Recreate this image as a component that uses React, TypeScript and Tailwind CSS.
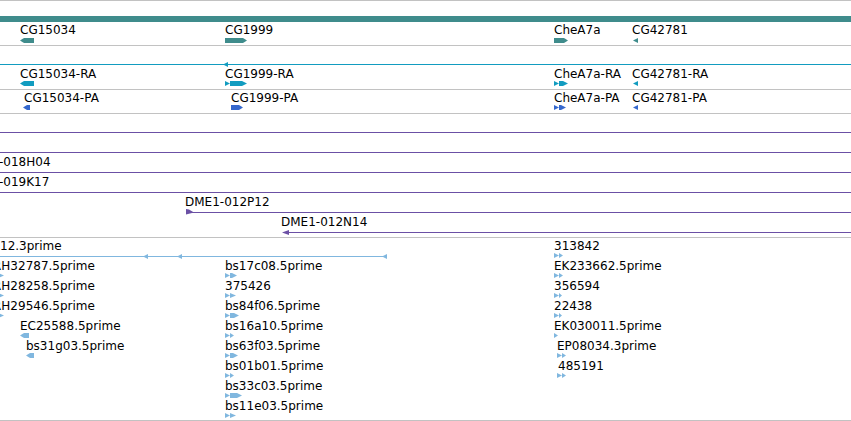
import React from "react";

const TEAL = "#3f8c8c";
const CYAN = "#129cc0";
const BLUE = "#3568cd";
const PURPLE = "#6b50a5";
const LIGHT = "#80b7df";

type Kind = "l" | "r" | "tl" | "tr" | "dr" | "rl";

const shape = (kind: Kind, w: number) => {
  switch (kind) {
    case "l":
      return [`0,2.5 4,0 ${w},0 ${w},5 4,5`];
    case "r":
      return [`0,0 ${w - 4},0 ${w},2.5 ${w - 4},5 0,5`];
    case "tl":
      return [`0,2.5 ${w},0 ${w},5`];
    case "tr":
      return [`0,0 ${w},2.5 0,5`];
    case "rl":
      // triangle followed by an arrow body (CG1999-RA)
      return ["0,0 5,2.5 0,5", `5,0 ${w - 5},0 ${w},2.5 ${w - 5},5 5,5`];
    case "dr":
      if (w <= 11) return ["0,0 5,2.5 0,5", `5,0 ${w},2.5 5,5`];
      return ["0,0 5,2.5 0,5", `5,0 ${w - 5},0 ${w},2.5 ${w - 5},5 5,5`];
  }
};

const Glyph = ({ w, kind, color }: { w: number; kind: Kind; color: string }) => (
  <svg className="block" width={w} height={5} viewBox={`0 0 ${w} 5`}>
    {shape(kind, w).map((p, i) => (
      <polygon key={i} points={p} fill={color} />
    ))}
  </svg>
);

type Feat = { x: number; label: string; w: number; kind: Kind; gdx?: number };

// label above, glyph below; x is the feature's place on the sequence
const Feature = ({ f, color, gap = 0 }: { f: Feat; color: string; gap?: number }) => (
  <div className="absolute top-0 flex flex-col items-start" style={{ left: f.x, gap }}>
    <span className="whitespace-nowrap text-[12px] leading-[14px] text-black">{f.label}</span>
    <div style={{ marginLeft: f.gdx ?? 0 }}>
      <Glyph w={f.w} kind={f.kind} color={color} />
    </div>
  </div>
);

const genes: Feat[] = [
  { x: 20, label: "CG15034", w: 14, kind: "l" },
  { x: 225, label: "CG1999", w: 22, kind: "r" },
  { x: 554, label: "CheA7a", w: 14, kind: "r" },
  { x: 632, label: "CG42781", gdx: 1, w: 5, kind: "tl" },
];

const transcripts: Feat[] = [
  { x: 20, label: "CG15034-RA", w: 14, kind: "l" },
  { x: 225, label: "CG1999-RA", w: 22, kind: "rl" },
  { x: 554, label: "CheA7a-RA", w: 14, kind: "dr" },
  { x: 632, label: "CG42781-RA", gdx: 1, w: 5, kind: "tl" },
];

const proteins: Feat[] = [
  { x: 24, label: "CG15034-PA", gdx: -1, w: 7, kind: "l" },
  { x: 231, label: "CG1999-PA", w: 12, kind: "r" },
  { x: 554, label: "CheA7a-PA", w: 12, kind: "dr" },
  { x: 632, label: "CG42781-PA", gdx: 1, w: 5, kind: "tl" },
];

// EST rows, top to bottom
const estRows: Feat[][] = [
  [{ x: 554, label: "313842", w: 9, kind: "dr" }],
  [
    { x: -7, label: "RH32787.5prime", gdx: 5, w: 6, kind: "tr" },
    { x: 225, label: "bs17c08.5prime", w: 12, kind: "dr" },
    { x: 554, label: "EK233662.5prime", w: 9, kind: "dr" },
  ],
  [
    { x: -7, label: "RH28258.5prime", gdx: 5, w: 6, kind: "tr" },
    { x: 225, label: "375426", w: 11, kind: "dr" },
    { x: 554, label: "356594", w: 8, kind: "dr" },
  ],
  [
    { x: -7, label: "RH29546.5prime", gdx: 5, w: 6, kind: "tr" },
    { x: 225, label: "bs84f06.5prime", w: 14, kind: "dr" },
    { x: 554, label: "22438", w: 8, kind: "dr" },
  ],
  [
    { x: 20, label: "EC25588.5prime", w: 9, kind: "l" },
    { x: 225, label: "bs16a10.5prime", w: 9, kind: "dr" },
    { x: 554, label: "EK030011.5prime", w: 4, kind: "tr" },
  ],
  [
    { x: 26, label: "bs31g03.5prime", w: 8, kind: "l" },
    { x: 225, label: "bs63f03.5prime", w: 13, kind: "dr" },
    { x: 557, label: "EP08034.3prime", w: 9, kind: "dr" },
  ],
  [
    { x: 225, label: "bs01b01.5prime", w: 9, kind: "dr" },
    { x: 558, label: "485191", gdx: -1, w: 9, kind: "dr" },
  ],
  [{ x: 225, label: "bs33c03.5prime", w: 17, kind: "dr" }],
  [{ x: 225, label: "bs11e03.5prime", w: 11, kind: "dr" }],
];

const Arrowhead = ({ x, color }: { x: number; color: string }) => (
  <svg className="absolute -top-[2px]" style={{ left: x }} width={5} height={5} viewBox="0 0 5 5">
    <polygon points="0,2.5 5,0 5,5" fill={color} />
  </svg>
);

export default function App() {
  return (
    <div className="w-[851px] h-[421px] overflow-hidden bg-white font-['DejaVu_Sans','Noto_Sans',sans-serif] flex flex-col">
      {/* gene track */}
      <div className="h-[46px] shrink-0 overflow-hidden border-y border-[#c2c2c2] flex flex-col">
        <div className="mt-[15px] h-[6px] w-full bg-[#3f8c8c]" />
        <div className="relative mt-px h-[20px]">
          {genes.map((f) => (
            <Feature key={f.label} f={f} color={TEAL} gap={1} />
          ))}
        </div>
      </div>

      {/* transcripts */}
      <div className="h-[44px] shrink-0 overflow-hidden border-b border-[#c2c2c2] flex flex-col">
        <div className="relative mt-[18px] h-px w-full bg-[#129cc0]">
          <Arrowhead x={223} color={CYAN} />
        </div>
        <div className="relative mt-[2px] h-[20px]">
          {transcripts.map((f) => (
            <Feature key={f.label} f={f} color={CYAN} />
          ))}
        </div>
      </div>

      {/* translations */}
      <div className="h-[24px] shrink-0 overflow-hidden border-b border-[#c2c2c2] flex flex-col">
        <div className="relative mt-px h-[20px]">
          {proteins.map((f) => (
            <Feature key={f.label} f={f} color={BLUE} />
          ))}
        </div>
      </div>

      {/* BAC clones */}
      <div className="relative h-[124px] shrink-0 overflow-hidden border-b border-[#c2c2c2] flex flex-col pt-[18px] gap-[19px]">
        <div className="h-px w-full bg-[#6b50a5]" />
        <div className="h-px w-full bg-[#6b50a5]" />
        <div className="h-px w-full bg-[#6b50a5]" />
        <div className="h-px w-full bg-[#6b50a5]" />
        <span className="absolute left-[-1px] top-[41px] whitespace-nowrap text-[12px] leading-[14px] text-black">
          -018H04
        </span>
        <span className="absolute left-[-1px] top-[61px] whitespace-nowrap text-[12px] leading-[14px] text-black">
          -019K17
        </span>
        <div className="absolute left-[185px] top-[81px] flex flex-col items-start">
          <span className="whitespace-nowrap text-[12px] leading-[14px] text-black">DME1-012P12</span>
          <svg className="block ml-px" width={666} height={6} viewBox="0 0 666 6">
            <polygon points="0,0 3,0.5 8,3.5 0,5.5" fill={PURPLE} />
            <rect x={4} y={3} width={662} height={1} fill={PURPLE} />
          </svg>
        </div>
        <div className="absolute left-[281px] top-[101px] flex flex-col items-start">
          <span className="whitespace-nowrap text-[12px] leading-[14px] text-black">DME1-012N14</span>
          <svg className="block ml-px" width={570} height={6} viewBox="0 0 570 6">
            <polygon points="0,3.5 7,1 7,6" fill={PURPLE} />
            <rect x={4} y={3} width={566} height={1} fill={PURPLE} />
          </svg>
        </div>
      </div>

      {/* ESTs */}
      <div className="h-[183px] shrink-0 overflow-hidden border-b border-[#c2c2c2] flex flex-col pt-px">
        {estRows.map((row, i) => (
          <div key={i} className="relative h-[20px] shrink-0">
            {i === 0 && (
              <>
                <span className="absolute left-0 top-0 whitespace-nowrap text-[12px] leading-[14px] text-black">
                  12.3prime
                </span>
                <div className="absolute left-0 top-[17px] h-px w-[386px] bg-[#80b7df]">
                  <Arrowhead x={143} color={LIGHT} />
                  <Arrowhead x={177} color={LIGHT} />
                  <Arrowhead x={382} color={LIGHT} />
                </div>
              </>
            )}
            {row.map((f) => (
              <Feature key={f.label} f={f} color={LIGHT} />
            ))}
          </div>
        ))}
      </div>
    </div>
  );
}
